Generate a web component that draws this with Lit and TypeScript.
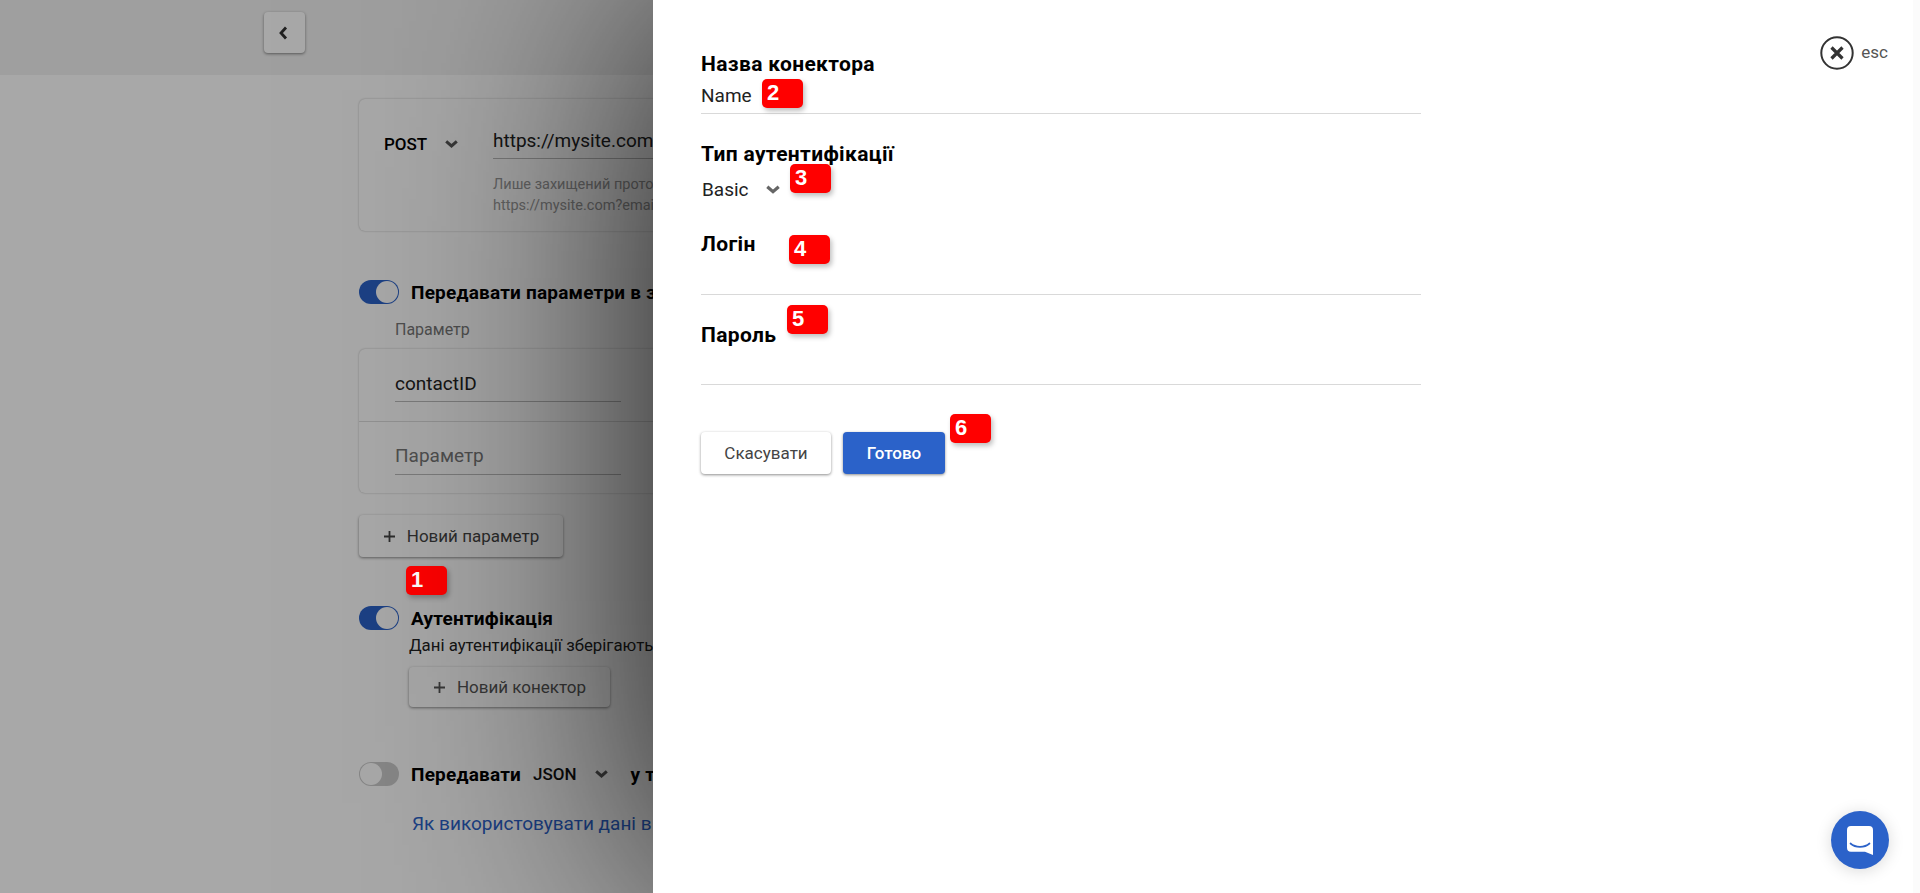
import { LitElement, html, css } from "lit";
import { customElement } from "lit/decorators.js";

const chevron = (w = 13) => html`<svg class="chev" width=${w} height=${Math.round(w * 0.62)} viewBox="0 0 13 8"><path d="M1.2 1.4 6.5 6 11.8 1.4" fill="none" stroke="currentColor" stroke-width="3"/></svg>`;
const plus = html`<svg width="13" height="13" viewBox="0 0 13 13"><path d="M6.5 1v11M1 6.5h11" stroke="currentColor" stroke-width="1.8" fill="none"/></svg>`;

@customElement("app-root")
export class AppRoot extends LitElement {
  static styles = css`
    :host { display: block; position: relative; width: 1920px; height: 893px; overflow: hidden; font-family: Roboto, "Noto Sans", sans-serif; color: #111; background: #fff; }
    .page { height: 893px; background: #fff; }
    .top { height: 75px; background: #f1f1f1; padding: 12px 0 0 264px; box-sizing: border-box; }
    .back { width: 41px; height: 41px; box-sizing: border-box; border-radius: 4px; background: #fff; box-shadow: 0 1px 3px rgba(0,0,0,.45); display: flex; align-items: center; justify-content: center; color: #333; padding-right: 4px; }
    .main { padding: 24px 0 0 359px; width: 900px; box-sizing: border-box; }
    .card { background: #fff; border-radius: 6px; box-shadow: 0 0 2px rgba(0,0,0,.3); }
    .url { height: 132px; box-sizing: border-box; display: flex; padding: 29px 0 0 25px; }
    .method { display: flex; align-items: center; gap: 18px; height: 32px; font-weight: 500; font-size: 17px; color: #000; width: 109px; flex: none; }
    .method .chev, .json .chev { color: #555; }
    .urlbody { flex: 1; }
    .urlinput { font-size: 19px; height: 30px; line-height: 26px; border-bottom: 1px solid #bbb; color: #222; white-space: nowrap; }
    .hint { margin-top: 15px; font-size: 14.5px; line-height: 21px; color: #999; white-space: nowrap; }
    .toggle-row { display: flex; align-items: center; gap: 12px; }
    .toggle { width: 40px; height: 24px; border-radius: 12px; background: #2b62c9; position: relative; flex: none; box-sizing: border-box; }
    .toggle::after { content: ""; position: absolute; right: 1px; top: 1px; width: 22px; height: 22px; border-radius: 50%; background: #fff; }
    .toggle.off { background: #ccc; }
    .toggle.off::after { right: auto; left: 1px; }
    .t1 { margin-top: 49px; }
    .bold { font-weight: 700; font-size: 19px; letter-spacing: .2px; color: #000; white-space: nowrap; }
    .plabel { margin: 16px 0 0 36px; font-size: 16px; line-height: 20px; color: #777; }
    .params { margin-top: 9px; height: 144px; }
    .prow { height: 72px; box-sizing: border-box; padding: 21px 0 0 36px; }
    .prow + .prow { border-top: 1px solid #ddd; padding-top: 20px; }
    .pin { width: 226px; height: 31px; font-size: 19px; line-height: 28px; border-bottom: 1px solid #bbb; color: #222; }
    .prow + .prow .pin { height: 32px; }
    .pin.ph { color: #777; }
    .btn { display: inline-flex; align-items: center; justify-content: center; box-sizing: border-box; border-radius: 4px; background: #fff; box-shadow: 0 1px 3px rgba(0,0,0,.45); font-size: 17px; color: #444; gap: 11px; white-space: nowrap; }
    .btn.new1 { margin-top: 22px; width: 204px; height: 42px; }
    .btn.new2 { margin: 12px 0 0 50px; width: 201px; height: 40px; color: #555; }
    .auth { margin-top: 49px; align-items: flex-start; }
    .authdesc { font-size: 16.8px; margin: 3px 0 0 50px; line-height: 20px; white-space: nowrap; color: #222; }
    .authtitle { line-height: 26px; }
    .json { margin-top: 55px; }
    .json .method2 { font-weight: 500; font-size: 17px; color: #111; margin-left: 12px; margin-right: 18px; }
    .json .w { display: flex; align-items: center; }
    .json .last { margin-left: 23px; }
    .link { margin: 25px 0 0 53px; font-size: 19px; line-height: 26px; color: #2b62c9; white-space: nowrap; }

    .overlay { position: absolute; left: 0; top: 0; width: 653px; height: 893px; background: rgba(0,0,0,.34); }

    .panel { position: absolute; left: 653px; top: 0; right: 0; height: 893px; background: #fff; padding: 49px 0 0 48px; box-sizing: border-box; box-shadow: 0 0 380px rgba(0,0,0,.9); }
    .form { width: 720px; display: flex; flex-direction: column; }
    .label { font-weight: 700; font-size: 21px; letter-spacing: .35px; line-height: 30px; color: #000; white-space: nowrap; }
    .fld { border-bottom: 1px solid #d9d9d9; font-size: 19px; line-height: 24px; color: #222; box-sizing: border-box; }
    .f-name { height: 35px; padding-top: 5px; }
    .f-type { margin-top: 25px; }
    .sel { display: flex; align-items: center; gap: 17px; height: 36px; margin-top: 2px; font-size: 19px; color: #222; padding-left: 1px; }
    .sel .chev { color: #666; }
    .f-log { margin-top: 22px; }
    .f-log .fld { height: 36px; }
    .f-pass .fld { height: 35px; }
    .f-pass { margin-top: 25px; }
    .actions { display: flex; gap: 12px; margin-top: 47px; }
    .actions .btn { height: 42px; }
    .cancel { width: 130px; }
    .done { width: 102px; background: #2b62c9; color: #fff; font-weight: 500; }

    .close { position: absolute; right: 32px; top: 36px; display: flex; align-items: center; gap: 7px; color: #555; font-size: 17px; }
    .close span { margin-top: -2px; }
    .fill { position: absolute; right: 0; top: 0; width: 7px; height: 893px; background: #fbfbfb; }
    .chat { position: absolute; left: 1178px; top: 811px; width: 58px; height: 58px; border-radius: 50%; background: #2b62c9; box-shadow: 0 2px 16px rgba(0,0,0,.15); display: flex; align-items: center; justify-content: center; }

    .badge { position: absolute; width: 41px; height: 29px; border-radius: 5px; background: #f00; color: #fff; font-family: "Liberation Sans", Arial, sans-serif; font-weight: 700; font-size: 22px; line-height: 27px; padding-left: 5px; box-sizing: border-box; box-shadow: 2px 3px 5px rgba(0,0,0,.25); }
  `;

  render() {
    return html`
      <div class="page">
        <div class="top"><div class="back"><svg width="10" height="14" viewBox="0 0 10 14"><path d="M8 1.5 3 7l5 5.5" fill="none" stroke="currentColor" stroke-width="2.8"/></svg></div></div>
        <div class="main">
          <div class="card url">
            <div class="method">POST ${chevron(13)}</div>
            <div class="urlbody">
              <div class="urlinput">https://mysite.com/webhook</div>
              <div class="hint">Лише захищений протокол<br />https://mysite.com?email=</div>
            </div>
          </div>
          <div class="toggle-row t1"><div class="toggle"></div><div class="bold">Передавати параметри в запиті</div></div>
          <div class="plabel">Параметр</div>
          <div class="card params">
            <div class="prow"><div class="pin">contactID</div></div>
            <div class="prow"><div class="pin ph">Параметр</div></div>
          </div>
          <div class="btn new1">${plus} Новий параметр</div>
          <div class="toggle-row auth"><div class="toggle"></div><div class="bold authtitle">Аутентифікація</div></div>
          <div class="authdesc">Дані аутентифікації зберігаються</div>
          <div class="btn new2">${plus} Новий конектор</div>
          <div class="toggle-row json">
            <div class="toggle off"></div>
            <div class="w"><span class="bold">Передавати</span><span class="method2">JSON</span>${chevron(13)}<span class="bold last">у тілі</span></div>
          </div>
          <div class="link">Як використовувати дані в запиті</div>
        </div>
      </div>
      <div class="overlay"></div>
      <div class="badge" style="left:406px;top:566px">1</div>
      <div class="panel">
        <div class="form">
          <div class="label">Назва конектора</div>
          <div class="fld f-name">Name</div>
          <div class="label f-type">Тип аутентифікації</div>
          <div class="sel">Basic ${chevron(14)}</div>
          <div class="f-log"><div class="label">Логін</div><div class="fld"></div></div>
          <div class="f-pass"><div class="label">Пароль</div><div class="fld"></div></div>
          <div class="actions"><div class="btn cancel">Скасувати</div><div class="btn done">Готово</div></div>
        </div>
        <div class="fill"></div>
        <div class="close">
          <svg width="34" height="34" viewBox="0 0 34 34"><circle cx="17" cy="17" r="15.7" fill="none" stroke="#333" stroke-width="2"/><path d="M11.5 11.5 22.5 22.5M22.5 11.5 11.5 22.5" stroke="#333" stroke-width="3.2" fill="none"/></svg>
          <span>esc</span>
        </div>
        <div class="chat">
          <svg width="26" height="29" viewBox="0 0 26 29"><path d="M4 0h18a4 4 0 0 1 4 4v25l-8-3.2H4a4 4 0 0 1-4-4V4a4 4 0 0 1 4-4z" fill="#fff"/><path d="M3.5 17.5c5 4.5 14 4.5 19 0" fill="none" stroke="#2b62c9" stroke-width="1.7" stroke-linecap="round"/></svg>
        </div>
        <div class="badge" style="left:109px;top:79px">2</div>
        <div class="badge" style="left:137px;top:164px">3</div>
        <div class="badge" style="left:136px;top:235px">4</div>
        <div class="badge" style="left:134px;top:305px">5</div>
        <div class="badge" style="left:297px;top:414px">6</div>
      </div>
    `;
  }
}
